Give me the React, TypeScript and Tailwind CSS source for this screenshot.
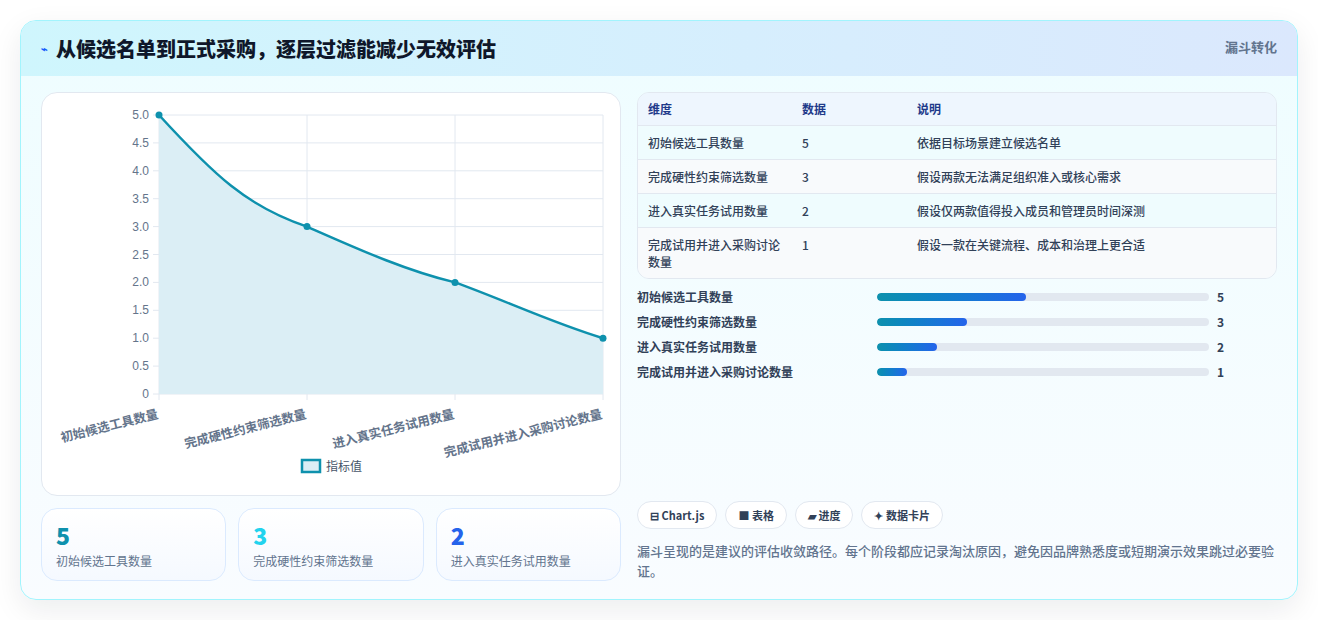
import React from 'react';

const rows = [
  { name: '初始候选工具数量', value: 5, note: '依据目标场景建立候选名单' },
  { name: '完成硬性约束筛选数量', value: 3, note: '假设两款无法满足组织准入或核心需求' },
  { name: '进入真实任务试用数量', value: 2, note: '假设仅两款值得投入成员和管理员时间深测' },
  { name: '完成试用并进入采购讨论数量', value: 1, note: '假设一款在关键流程、成本和治理上更合适' },
];

const font = { fontFamily: '"Noto Sans CJK SC", "Noto Sans", sans-serif' };

function Chart() {
  const x0 = 117, x1 = 561, y0 = 22, y1 = 301;
  const xs = [0, 1, 2, 3].map(i => x0 + ((x1 - x0) / 3) * i);
  const y = (v: number) => y1 - ((y1 - y0) / 5) * v;
  const pts = rows.map((r, i) => [xs[i], y(r.value)] as [number, number]);
  const line = `M${pts[0][0]},${pts[0][1]} C${pts[0][0] + 55},${pts[0][1] + 60} ${pts[1][0] - 60},${pts[1][1] - 20} ${pts[1][0]},${pts[1][1]} C${pts[1][0] + 50},${pts[1][1] + 22} ${pts[2][0] - 50},${pts[2][1] - 12} ${pts[2][0]},${pts[2][1]} C${pts[2][0] + 50},${pts[2][1] + 18} ${pts[3][0] - 50},${pts[3][1] - 15} ${pts[3][0]},${pts[3][1]}`;
  const ticks = [0, 0.5, 1, 1.5, 2, 2.5, 3, 3.5, 4, 4.5, 5];
  return (
    <svg width="580" height="403" className="block">
      {ticks.map(t => (
        <g key={t}>
          <line x1={x0 - 6} x2={x1} y1={y(t)} y2={y(t)} stroke="#e2e8f0" />
          <text x={x0 - 10} y={y(t) + 4} textAnchor="end" fontSize="12" fill="#64748b" fontFamily="Liberation Sans, sans-serif">
            {t === 0 ? '0' : t.toFixed(1)}
          </text>
        </g>
      ))}
      {xs.map((x, i) => (
        <line key={i} x1={x} x2={x} y1={y0} y2={y1 + 6} stroke="#e2e8f0" />
      ))}
      <path d={`${line} L${x1},${y1} L${x0},${y1} Z`} fill="#dbeef5" />
      <path d={line} fill="none" stroke="#0e91ad" strokeWidth="2.5" />
      {pts.map((p, i) => (
        <circle key={i} cx={p[0]} cy={p[1]} r="3.5" fill="#0e91ad" />
      ))}
      {rows.map((r, i) => (
        <text key={i} x={xs[i]} y={y1 + 24} textAnchor="end" fontSize="12.5" fontWeight="600" fill="#64748b" transform={`rotate(-14 ${xs[i]} ${y1 + 24})`} style={font}>
          {r.name}
        </text>
      ))}
      <rect x="260" y="367" width="18" height="12" fill="#dbeef5" stroke="#0e91ad" strokeWidth="2.5" />
      <text x="284" y="378" fontSize="12" fill="#475569" style={font}>指标值</text>
    </svg>
  );
}

export default function App() {
  return (
    <div className="min-h-screen bg-white p-5" style={font}>
      <div className="rounded-2xl border border-cyan-200 bg-gradient-to-b from-[#eefdff] to-[#f9fcff] shadow-[0_10px_30px_rgba(15,23,42,0.08)] overflow-hidden">
        <div className="flex items-center justify-between bg-gradient-to-r from-[#cff6fd] to-[#dbe8fd] px-5 h-[55px]">
          <h1 className="flex items-center gap-2 text-[20px] font-black text-[#0f172a]">
            <span className="text-[11px] text-blue-600">⌁</span>从候选名单到正式采购，逐层过滤能减少无效评估
          </h1>
          <span className="text-[13px] font-semibold text-slate-500 self-start mt-4">漏斗转化</span>
        </div>
        <div className="flex gap-4 px-5 pt-4 pb-[18px]">
          <div className="w-[580px] flex flex-col gap-3">
            <div className="h-[404px] rounded-2xl border border-slate-200 bg-white">
              <Chart />
            </div>
            <div className="grid grid-cols-3 gap-3">
              {[['5', 'text-[#0e91ad]'], ['3', 'text-[#22d3ee]'], ['2', 'text-[#2563eb]']].map(([v, c], i) => (
                <div key={i} className="h-[73px] rounded-2xl border border-blue-100 bg-gradient-to-b from-white to-[#f5f9ff] px-[14px] pt-3">
                  <div className={`text-[23px] font-black leading-7 ${c}`}>{v}</div>
                  <div className="text-xs text-slate-500 mt-1">{rows[i].name}</div>
                </div>
              ))}
            </div>
          </div>
          <div className="flex-1 flex flex-col">
            <div className="rounded-xl border border-slate-200 overflow-hidden text-xs text-slate-700">
              <div className="grid grid-cols-[154px_115px_1fr] bg-[#eef6fe] border-b border-slate-200 h-[33px] items-center px-[10px] font-semibold text-[#1e3a8a]">
                <span>维度</span><span>数据</span><span>说明</span>
              </div>
              {rows.map((r, i) => (
                <div key={i} className={`grid grid-cols-[154px_115px_1fr] px-[10px] py-2 leading-[17px] font-medium ${i % 2 ? 'bg-[#f8fafc]' : 'bg-[#effcfe]'} ${i < 3 ? 'border-b border-slate-200' : ''}`}>
                  <span className="pr-4">{r.name}</span><span>{r.value}</span><span>{r.note}</span>
                </div>
              ))}
            </div>
            <div className="mt-[10px] flex flex-col gap-[9px]">
              {rows.map((r, i) => (
                <div key={i} className="flex items-center h-4 text-xs font-semibold text-slate-700">
                  <span className="w-[240px]">{r.name}</span>
                  <div className="w-[332px] h-2 rounded-full bg-slate-200 overflow-hidden">
                    <div className="h-full rounded-full bg-gradient-to-r from-[#0e91ad] to-[#2563eb]" style={{ width: `${r.value * 9}%` }} />
                  </div>
                  <span className="ml-2 font-bold">{r.value}</span>
                </div>
              ))}
            </div>
            <div className="mt-auto flex gap-2">
              {['⊟ Chart.js', '■ 表格', '▰ 进度', '✦ 数据卡片'].map(t => (
                <span key={t} className="rounded-full border border-slate-200 bg-white px-3 h-[28px] flex items-center text-[11px] font-semibold text-slate-700">{t}</span>
              ))}
            </div>
            <p className="mt-3 text-[13px] leading-5 text-slate-500 font-medium">漏斗呈现的是建议的评估收敛路径。每个阶段都应记录淘汰原因，避免因品牌熟悉度或短期演示效果跳过必要验证。</p>
          </div>
        </div>
      </div>
    </div>
  );
}
